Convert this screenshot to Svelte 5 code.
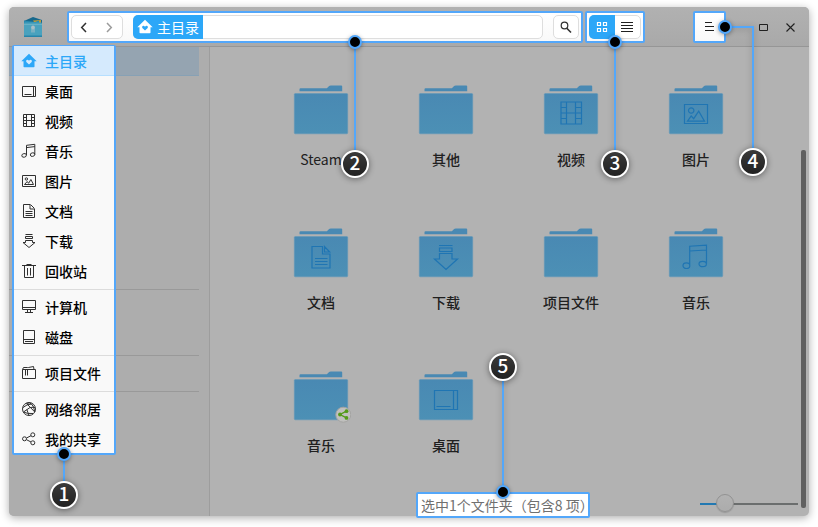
<script>
  const groups = [
    [
      ['home', '主目录'],
      ['desktop', '桌面'],
      ['video', '视频'],
      ['music', '音乐'],
      ['picture', '图片'],
      ['doc', '文档'],
      ['download', '下载'],
      ['trash', '回收站']
    ],
    [
      ['computer', '计算机'],
      ['disk', '磁盘']
    ],
    [['bookmark', '项目文件']],
    [
      ['network', '网络邻居'],
      ['share', '我的共享']
    ]
  ];

  const folders = [
    ['Steam', ''],
    ['其他', ''],
    ['视频', 'video'],
    ['图片', 'picture'],
    ['文档', 'doc'],
    ['下载', 'download'],
    ['项目文件', ''],
    ['音乐', 'music'],
    ['音乐', '', true],
    ['桌面', 'desktop']
  ];

  const icons = {
    desktop: 'M1.5 3.5h13v10h-13zM12.5 3.5v10M3.5 11.5h7',
    video: 'M2.5 1.5h11v12h-11zM5.5 1.5v12M10.5 1.5v12M2.5 4.5h3M2.5 7.5h11M2.5 10.5h3M10.5 4.5h3M10.5 10.5h3',
    music: 'M5.5 12V2.3l8.3-1V11.5M5.5 4.6l8.3-1M.8 12.8a2.2 1.7 -15 1 0 4.6-.8a2.2 1.7 -15 1 0-4.6.8zM9.3 12a2.2 1.7 -15 1 0 4.5-.8a2.2 1.7 -15 1 0-4.5.8z',
    picture: 'M1.5 2.5h13v11h-13zM3.5 11.5h9l-2.6-5-2.3 3.8-1.4-1.8zM4.2 6a1.2 1.2 0 1 0 2.4 0a1.2 1.2 0 1 0-2.4 0z',
    doc: 'M2.5 1.5h6.5v4.5h4.500v8.500h-11zM9.500 1.500l4 4M4.500 8.500h7M4.500 10.500h7M4.500 12.500h7',
    download: 'M4.500 1.500h7M4.500 3.500h7v2h-7zM4.500 7.500v2h-2.500l6 5 6-5h-2.500v-2z',
    trash: 'M1 2.500h14M5.500 1.500h5M3.500 2.500v12h9v-12M6.500 5v7.500M9.500 5v7.500',
    computer: 'M1.500 1.500h13v9h-13zM1.500 8.500h13M6.500 10.500v2.500M9.500 10.500v2.500M4 13.500h8',
    disk: 'M2.500 1.500h11v13h-11zM2.500 10.500h11M4 12.500h8',
    bookmark: 'M1.500 4.500h13v9h-13zM1.500 4.500l1-2h4l1 0 5-1 .5 3M4.500 4.500v6M6.500 4.500v6',
    network: 'M1.500 8a6.500 6.500 0 1 0 13 0a6.500 6.500 0 1 0-13 0zM5.500 2.500L13.800 11M5.500 2.500Q9 1 10.500 3Q13 5 13.800 11M2 6.500Q6 3 10.500 3M2.500 11L9 6.500M2.500 11Q6 13 12 12.500M5.800 8.500L8 14.500M9 6.500Q13 6 14 6.500'
  };

  const glyphs = {
    video: 'M17 17h20.500v22h-20.500zM22.500 17v22M31.500 17v22M22.500 28h9M17 22.500h5.500M17 28h5.500M17 33.500h5.500M31.500 22.500h6M31.500 28h6M31.500 33.500h6',
    picture: 'M15.500 19.500h23v19h-23zM18.500 36.200h17l-5.800-10-5 7.500-2.500-2.700zM19.500 25.500a2.700 2.700 0 1 0 5.400 0a2.700 2.700 0 1 0-5.400 0z',
    doc: 'M18 18.500h10.500v7.500h7.500v14h-18zM30.500 18.500v5.500h5.200zM21 30.500h12.500M21 33.500h12.500M21 36.500h12.500',
    download: 'M20 17.500h13.500M20.500 20h12.500v3.500h-12.500zM20.500 25.500v5.500h-5l11.500 10.500 11.500-10.500h-5.500v-5.500z',
    music: 'M20.700 37V18.200l16.800-1V35.500M20.700 23l16.800-1M14 37.700a3.400 2.800 0 1 0 6.800 0a3.400 2.800 0 1 0-6.800 0zM30 36a3.700 2.700 0 1 0 7.400 0a3.700 2.700 0 1 0-7.400 0z',
    desktop: 'M15.500 19.500h23v19h-23zM34.500 19.500v19M17.500 35.500h14'
  };

  const badges = [
    [64, 494, '1'],
    [355, 163, '2'],
    [615, 163, '3'],
    [753, 161, '4'],
    [503, 366, '5']
  ];
  const dots = [
    [64, 454],
    [355, 42],
    [615, 42],
    [725, 27],
    [503, 492]
  ];
  const housePath = 'M8 .8L15.700 8.200h-2.200v5.300q0 .8-.8.8H3.300q-.8 0-.8-.8V8.200H.3z';
  const heartPath = 'M8 11.600L5.300 8.900Q4.700 7.600 5.700 7Q7 6.500 8 7.800Q9 6.500 10.300 7Q11.300 7.600 10.700 8.900z';
</script>

<div class="stage">
  <div class="window">
    <header>
      <svg class="logo" width="20" height="22" viewBox="0 0 20 22">
        <path d="M1 4L10 0l9 3v4H1z" fill="#17688c" />
        <path d="M10 3.500l8-.5v4h-6z" fill="#c09b38" />
        <path d="M1 3.500l11 1.500 4-1.500v4H1z" fill="#268bb0" />
        <rect x="1" y="5.500" width="18" height="14.500" rx="1" fill="#4aa2be" />
        <path d="M1 7.500h18" stroke="#67b1c6" />
        <path d="M1 18.500h18v1.500H1z" fill="#2685aa" />
        <circle cx="10" cy="10.500" r="1.900" fill="#a9bec5" />
        <path d="M8.500 11.500h1v4h-1zM10.500 11.500h1v4h-1z" fill="#a9bec5" />
      </svg>
      <div class="spot address">
        <div class="control history">
          <svg width="50" height="24" fill="none" stroke-width="1.500">
            <path d="M14 7l-4.300 4.500 4.300 4.500" stroke="#303030" />
            <path d="M35 7l4.300 4.500-4.300 4.500" stroke="#9b9b9b" />
          </svg>
        </div>
        <div class="control path">
          <span class="crumb">
            <svg width="16" height="16"><path d={housePath} fill="#fff" /><path d={heartPath} fill="#2ca7f8" /></svg>
            <b>主目录</b>
          </span>
        </div>
        <div class="control search">
          <svg width="24" height="24" fill="none" stroke="#303030">
            <circle cx="10.500" cy="9.500" r="3.300" stroke-width="1.200" /><path d="M12.800 12.200l4.200 4.300" stroke-width="1.600" />
          </svg>
        </div>
      </div>
      <div class="spot views">
        <div class="control toggle">
          <span class="on">
            <svg width="12" height="12" fill="none" stroke="#fff" stroke-width="1.200"><path d="M1.500 1.500h3v3h-3zM7.500 1.500h3v3h-3zM1.500 7.500h3v3h-3zM7.500 7.500h3v3h-3z" /></svg>
          </span>
          <span>
            <svg width="12" height="12" stroke="#202020"><path d="M0 1.500h12M0 4.500h12M0 7.500h12M0 10.500h12" /></svg>
          </span>
        </div>
      </div>
      <div class="spot menu">
        <svg width="10" height="10" stroke="#202020"><path d="M0 .5h7M0 4.500h9M0 8.500h9" /></svg>
      </div>
      <svg class="wincontrols" width="40" height="12" fill="none" stroke="#202020">
        <path d="M1.500 2.500h8v6h-8z" /><path d="M28.500 1.500l8 8M36.500 1.500l-8 8" stroke-width="1.100" />
      </svg>
    </header>

    <div class="body">
      <aside>
        <div class="selected"></div>
        {#each groups as group}
          <div class="section" style:height="{group.length * 30}px"></div>
        {/each}
        <nav>
          {#each groups as group}
            <ul>
              {#each group as [icon, label]}
                <li class:active={icon === 'home'}>
                  <svg width="16" height="16" fill="none" stroke="#303030">
                    {#if icon === 'home'}
                      <path d={housePath} fill="#2ca7f8" stroke="none" />
                      <path d={heartPath} fill="#d5eafd" stroke="none" />
                    {:else if icon === 'share'}
                      <path d="M5.500 7l4.500-2.300M5.500 8.700l4.500 2.300" />
                      <circle cx="3.500" cy="7.800" r="2" /><circle cx="11.800" cy="3.800" r="2" /><circle cx="11.800" cy="11.800" r="2" />
                    {:else}
                      <path d={icons[icon]} />
                    {/if}
                  </svg>
                  <span>{label}</span>
                </li>
              {/each}
            </ul>
          {/each}
        </nav>
      </aside>

      <main>
        <div class="files">
          {#each folders as [label, glyph, shared]}
            <figure>
              <svg width="60" height="54" viewBox="-3 0 60 54">
                <defs>
                  <linearGradient id="folder" x1="0" y1="0" x2="0" y2="1">
                    <stop offset="0" stop-color="#4989b3" /><stop offset="1" stop-color="#4c90b5" />
                  </linearGradient>
                </defs>
                <path d="M5.500 6.200V4.300q0-1 1-1H32q1 0 1.600-.9l1-1Q35.500.5 37 .5h10.200q1 0 1 1v4.700z" fill="#4989b3" />
                <rect x=".3" y="8.500" width="53.400" height="40.300" rx="1" fill="url(#folder)" stroke="#6398b8" stroke-width=".6" />
                {#if glyph}
                  <path d={glyphs[glyph]} fill="none" stroke="#1f75b3" stroke-width="1.200" />
                {/if}
                {#if shared}
                  <circle cx="49.300" cy="43.700" r="7.500" fill="#c0c0be" stroke="#a4a4a2" />
                  <path d="M52.500 40.200L46 43.500l6.500 3.300" fill="none" stroke="#539a18" stroke-width="1.300" />
                  <circle cx="46" cy="43.500" r="1.900" fill="#539a18" /><circle cx="52.500" cy="40.200" r="1.900" fill="#539a18" /><circle cx="52.500" cy="46.900" r="1.900" fill="#539a18" />
                {/if}
              </svg>
              <figcaption>{label}</figcaption>
            </figure>
          {/each}
        </div>
        <div class="scrollbar"></div>
        <footer>
          <div class="spot status">选中1个文件夹（包含8 项）</div>
          <div class="slider"><i></i></div>
        </footer>
      </main>
    </div>
  </div>

  <svg class="callouts" width="818" height="527">
    <defs>
      <linearGradient id="badge" x1="0" y1="0" x2="0" y2="1">
        <stop offset="0" stop-color="#3b3b3b" /><stop offset="1" stop-color="#202020" />
      </linearGradient>
    </defs>
    <path class="wires" d="M64 454v30M355 42v110M615 42v110M725 27H753V150M503 492V378" />
    {#each dots as [x, y]}
      <circle class="dot" cx={x} cy={y} r="6" />
    {/each}
    {#each badges as [x, y, n]}
      <g class="badge">
        <circle cx={x} cy={y + 1} r="13" />
        <text {x} y={y + 7}>{n}</text>
      </g>
    {/each}
  </svg>
</div>

<style>
  :global(body) {
    margin: 0;
    background: #fff;
  }
  .stage {
    position: relative;
    box-sizing: border-box;
    width: 818px;
    height: 527px;
    padding: 7px 9px 11px;
    overflow: hidden;
    font: 14px/20px 'Noto Sans CJK SC', sans-serif;
  }
  svg {
    display: block;
    flex: none;
  }
  .window {
    display: flex;
    flex-direction: column;
    height: 509px;
    border-radius: 5px;
    background: #b2b2b2;
    box-shadow: 0 2px 8px rgba(0, 0, 0, 0.32);
  }
  header {
    display: flex;
    align-items: flex-start;
    box-sizing: border-box;
    height: 40px;
    padding: 4px 0 0 14px;
    border-bottom: 1px solid #969696;
    border-radius: 5px 5px 0 0;
    background: linear-gradient(#b1b1b1, #a9a9a9);
  }
  .logo {
    margin: 6px 24px 0 0;
  }
  .spot {
    display: flex;
    align-items: center;
    box-sizing: border-box;
    height: 32px;
    border: 2px solid #53a7fa;
    border-radius: 2px;
    background: linear-gradient(#fff, #f9f9f9);
  }
  .address {
    width: 516px;
    padding: 0 2px;
  }
  .control {
    display: flex;
    box-sizing: border-box;
    height: 24px;
    border: 1px solid #dedede;
    border-radius: 5px;
    background: #fff;
  }
  .history {
    width: 52px;
    margin-right: 10px;
  }
  .path {
    width: 410px;
    margin-right: 10px;
  }
  .crumb {
    display: flex;
    align-items: center;
    gap: 4px;
    width: 70px;
    height: 24px;
    margin: -1px;
    padding-left: 4px;
    box-sizing: border-box;
    border-radius: 5px 0 0 5px;
    background: #2ca7f8;
    color: #fff;
    white-space: nowrap;
  }
  .crumb b {
    font-weight: 400;
    padding-bottom: 1px;
  }
  .search {
    width: 26px;
  }
  .views {
    width: 60px;
    margin-left: 2px;
    padding-left: 2px;
  }
  .toggle {
    width: 52px;
  }
  .toggle span {
    display: grid;
    place-items: center;
    width: 24px;
  }
  .toggle .on {
    width: 26px;
    margin: -1px 0 -1px -1px;
    border-radius: 5px 0 0 5px;
    background: #2ca7f8;
  }
  .menu {
    width: 33px;
    margin-left: 48px;
    padding-left: 10px;
  }
  .wincontrols {
    margin: 11px 0 0 32px;
  }
  .body {
    display: flex;
    flex: 1;
  }
  aside {
    position: relative;
    box-sizing: border-box;
    width: 201px;
    border-right: 1px solid #9d9d9d;
    border-radius: 0 0 0 5px;
    background: #adadad;
  }
  .selected {
    width: 190px;
    height: 28px;
    margin-bottom: -30px;
    background: #95a4b1;
    border-bottom: 1px solid #87a1b5;
  }
  .section {
    width: 190px;
    padding-top: 2px;
    padding-bottom: 3px;
    border-bottom: 1px solid #999;
  }
  .section:nth-child(2) {
    padding-top: 0;
  }
  .selected + .section {
    margin-top: -1px;
  }
  .section:nth-child(5) {
    border: 0;
  }
  nav {
    position: absolute;
    box-sizing: border-box;
    left: 3px;
    top: -2px;
    width: 104px;
    height: 410px;
    border: 2px solid #53a7fa;
    border-radius: 2px;
    background: #f9f9f9;
  }
  ul {
    margin: 0 0 3px;
    padding: 0;
    list-style: none;
  }
  ul:first-child {
    margin-top: -1px;
  }
  ul + ul {
    padding-top: 2px;
    border-top: 1px solid #dcdcdc;
  }
  li {
    display: flex;
    align-items: center;
    gap: 8px;
    height: 30px;
    padding-left: 7px;
    color: #000;
    font-weight: 500;
    white-space: nowrap;
  }
  li span {
    padding-bottom: 1px;
  }
  li.active {
    box-sizing: border-box;
    padding-top: 1px;
    color: #2ca7f8;
    background: #d5eafd;
    border-bottom: 1px solid #b6dfff;
  }
  main {
    position: relative;
    flex: 1;
    display: flex;
    flex-direction: column;
  }
  .files {
    display: grid;
    grid-template-columns: repeat(4, 125px);
    grid-auto-rows: 143px;
    padding: 38px 0 0 48.500px;
    height: 407px;
  }
  figure {
    display: flex;
    flex-direction: column;
    align-items: center;
    margin: 0;
  }
  figcaption {
    margin-top: 9.500px;
    color: #202020;
    font-weight: 500;
  }
  figure:first-child figcaption {
    font-weight: 400;
  }
  .scrollbar {
    position: absolute;
    right: 3px;
    top: 103px;
    width: 5px;
    height: 358px;
    border-radius: 2px;
    background: #606060;
  }
  footer {
    display: flex;
    align-items: flex-start;
    height: 24px;
    padding-left: 206px;
  }
  .status {
    width: 174px;
    height: 26px;
    padding-left: 3px;
    background: #fff;
    color: #707070;
    white-space: nowrap;
  }
  .slider {
    position: relative;
    width: 98px;
    height: 2px;
    margin: 11px 0 0 110px;
    background: linear-gradient(90deg, #2379b2 24px, #6b6e6e 24px);
  }
  .slider i {
    position: absolute;
    box-sizing: border-box;
    left: 16px;
    top: -9px;
    width: 18px;
    height: 18px;
    border: 1px solid #929292;
    border-radius: 50%;
    background: linear-gradient(#b2b2b2, #acacac);
    box-shadow: 0 1px 1px rgba(0, 0, 0, 0.15);
  }
  .callouts {
    position: absolute;
    left: 0;
    top: 0;
  }
  .wires {
    fill: none;
    stroke: #53a7fa;
    stroke-width: 2;
    filter: drop-shadow(0 1px 3px rgba(0, 0, 0, 0.25));
  }
  .dot {
    fill: #000;
    stroke: #53a7fa;
    stroke-width: 2;
    filter: drop-shadow(0 1px 2px rgba(0, 0, 0, 0.35));
  }
  .badge circle {
    fill: url(#badge);
    stroke: #fff;
    stroke-width: 2;
    filter: drop-shadow(0 1px 3px rgba(0, 0, 0, 0.45));
  }
  .badge text {
    fill: #fff;
    font-size: 19px;
    font-weight: 500;
    text-anchor: middle;
  }
</style>
